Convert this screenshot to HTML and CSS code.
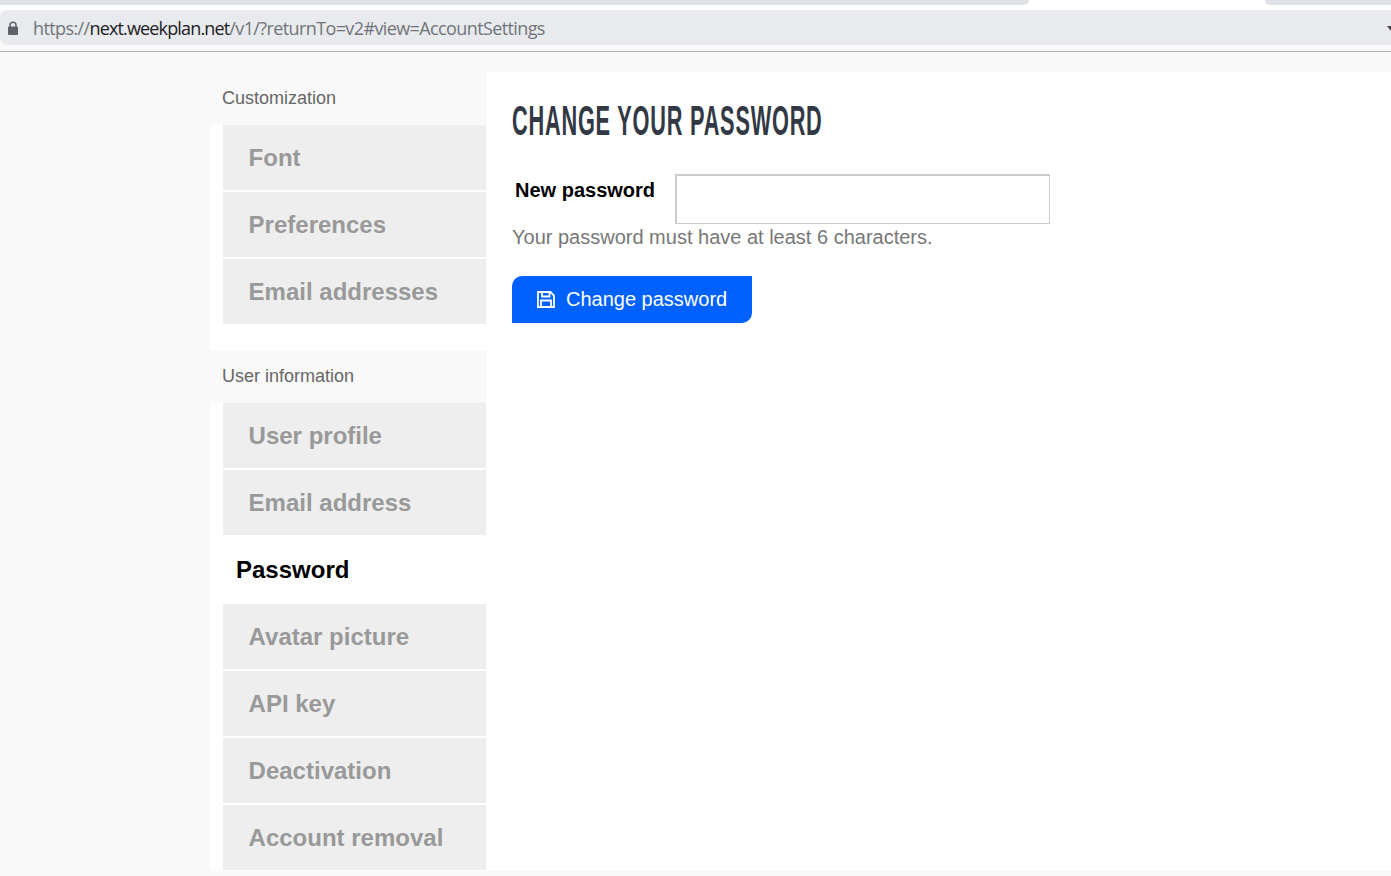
FILE: index.html
```html
<!DOCTYPE html>
<html lang="en">
<head>
  <meta charset="UTF-8" />
  <title>Account settings</title>
  <link rel="stylesheet" href="styles.css">
</head>
<body>
  <div class="tabstrip">
    <div class="tab-left"></div>
    <div class="tab-active"></div>
    <div class="tab-right"></div>
  </div>
  <div class="addressbar">
    <svg class="lock" width="12" height="14" viewBox="0 0 12 14">
      <path d="M3 6V4.2a3 3 0 0 1 6 0V6" fill="none" stroke="#5f6368" stroke-width="1.5"/>
      <rect x="1" y="5.5" width="10" height="8.5" rx="1" fill="#5f6368"/>
    </svg>
    <span class="url">https://<b>next.weekplan.net</b>/v1/?returnTo=v2#view=AccountSettings</span>
    <span class="more"></span>
  </div>
  <div class="page">
    <div class="sidebar">
      <div class="group">
        <div class="group-title">Customization</div>
        <a class="item">Font</a>
        <a class="item">Preferences</a>
        <a class="item">Email addresses</a>
      </div>
      <div class="group">
        <div class="group-title">User information</div>
        <a class="item">User profile</a>
        <a class="item">Email address</a>
        <a class="item active">Password</a>
        <a class="item">Avatar picture</a>
        <a class="item">API key</a>
        <a class="item">Deactivation</a>
        <a class="item">Account removal</a>
      </div>
    </div>
    <div class="main">
      <h1>Change your password</h1>
      <div class="field">
        <label for="new-password">New password</label>
        <input type="password" id="new-password" />
      </div>
      <p class="hint">Your password must have at least 6 characters.</p>
      <button class="save">
        <svg width="18" height="17" viewBox="0 0 18 17" fill="none" stroke="#fff" stroke-width="1.8">
          <path d="M1 1h12.5L17 4.5V16H1z"/>
          <path d="M5 1v4.5h7.5V1"/>
          <path d="M4 16V9.5h10V16"/>
        </svg>
        Change password
      </button>
    </div>
  </div>
</body>
</html>
```

FILE: styles.css
```css
* { box-sizing: border-box; }
html, body { height: 100%; }
body {
  margin: 0;
  background: #f9f9f9;
  font-family: "Liberation Sans", Arial, sans-serif;
  overflow: hidden;
}
.tabstrip {
  display: flex;
  height: 10px;
  background: #fff;
}
.tab-left, .tab-right {
  height: 5px;
  background: #dee1e6;
}
.tab-left {
  width: 1029px;
  border-bottom-right-radius: 6px;
}
.tab-active {
  width: 236px;
}
.tab-right {
  flex: 1;
  border-bottom-left-radius: 6px;
}
.addressbar {
  display: flex;
  align-items: center;
  height: 35px;
  background: #e8eaed;
  border-radius: 8px 0 0 8px;
  padding-left: 7px;
  position: relative;
}
.lock {
  flex: none;
}
.url {
  margin-left: 14px;
  font-family: "Open Sans", sans-serif;
  font-size: 18px;
  letter-spacing: -0.61px;
  color: #70757a;
}
.url b {
  font-weight: 400;
  letter-spacing: -0.85px;
  color: #202124;
}
.more {
  position: absolute;
  right: 0;
  top: 16px;
  width: 0;
  height: 0;
  border: 4px solid transparent;
  border-top: 5px solid #444;
  border-right: 0;
}
.page {
  display: flex;
  margin-top: 6px;
  border-top: 1px solid #b4b4b4;
  padding: 20px 0 0 210px;
  height: 820px;
}
.sidebar {
  width: 277px;
  background: #fff;
}
.group {
  margin-bottom: 26px;
}
.group:last-child {
  margin-bottom: 0;
}
.group-title {
  height: 53px;
  padding: 16px 0 0 12px;
  background: #f9f9f9;
  font-size: 18px;
  color: #666;
}
.item {
  display: block;
  height: 65px;
  margin: 0 1px 2px 13px;
  padding-left: 25.6px;
  background: #eee;
  color: #999;
  font-size: 24px;
  font-weight: bold;
  line-height: 65px;
}
.item.active {
  background: #fff;
  color: #000;
  padding-left: 13px;
}
.main {
  flex: 1;
  background: #fff;
  padding: 0 25px;
}
/* no condensed face installed, so squeeze the bold one */
h1 {
  margin: 24px 0 0;
  font-size: 42px;
  font-weight: bold;
  line-height: 50px;
  letter-spacing: 1.5px;
  text-transform: uppercase;
  white-space: nowrap;
  color: #323844;
  transform: scaleX(0.5175);
  transform-origin: left center;
}
.field {
  display: flex;
  align-items: flex-start;
  margin-top: 28px;
}
.field label {
  width: 163px;
  padding: 5px 0 0 3px;
  font-size: 20px;
  font-weight: bold;
  color: #000;
}
.field input {
  width: 375px;
  height: 50px;
  border: 1px solid #ccc;
  border-top: 2px solid #ccc;
  border-left: 2px solid #ccc;
  background: #fff;
}
.hint {
  margin: 0;
  padding-top: 1px;
  padding-bottom: 1px;
  font-size: 20px;
  line-height: 24px;
  color: #777;
}
.save {
  display: flex;
  align-items: center;
  gap: 11px;
  width: 240px;
  height: 47px;
  margin-top: 26px;
  padding: 0 0 1px 25px;
  border: none;
  border-radius: 10px 0 10px 0;
  background: #0061ff;
  color: #fff;
  font-family: "Liberation Sans", sans-serif;
  font-size: 20px;
}
```
